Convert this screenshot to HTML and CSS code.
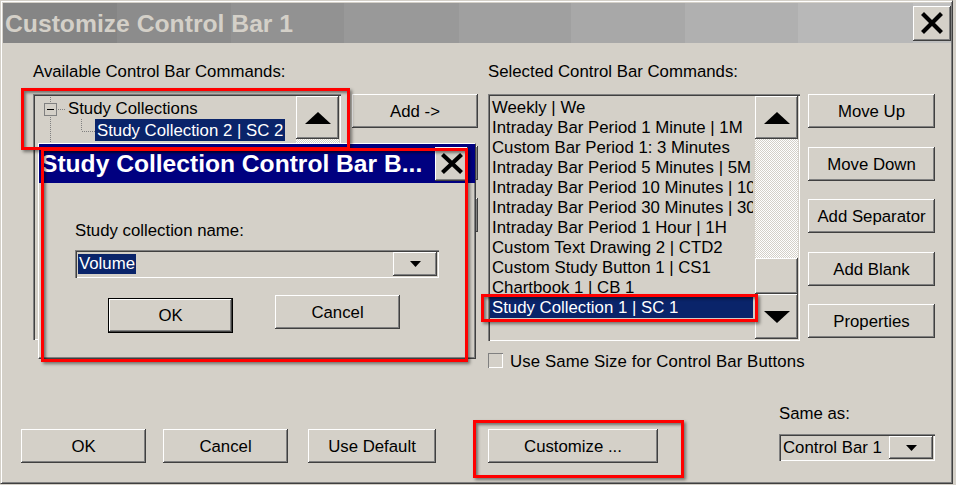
FILE: index.html
```html
<!DOCTYPE html>
<html>
<head>
<meta charset="utf-8">
<link rel="stylesheet" href="styles.css">
</head>
<body>
<div class="window">
  <div class="titlebar">
    <span class="title">Customize Control Bar 1</span>
    <div class="close-btn main-close">
      <svg width="22" height="22" viewBox="0 0 22 22"><path d="M3 3 L19 19 M19 3 L3 19" stroke="#000" stroke-width="4.2" stroke-linecap="square"/></svg>
    </div>
  </div>

  <div class="labels">
    <span>Available Control Bar Commands:</span>
    <span>Selected Control Bar Commands:</span>
  </div>

  <div class="panels">
    <div class="tree sunken">
      <div class="tree-items">
        <div class="tree-row">
          <svg class="tcell" width="31" height="22" viewBox="0 0 31 22">
            <path d="M15.5 0 V6 M15.5 18 V22" stroke="#808080" stroke-dasharray="1 1"/>
            <path d="M21 12.5 H31" stroke="#808080" stroke-dasharray="1 1"/>
            <rect x="9.5" y="6.5" width="12" height="12" fill="none" stroke="#808080"/>
            <path d="M12 12.5 H19" stroke="#000"/>
          </svg>
          <span class="tlabel">Study Collections</span>
        </div>
        <div class="tree-row">
          <svg class="tcell" width="31" height="22" viewBox="0 0 31 22">
            <path d="M15.5 0 V22" stroke="#808080" stroke-dasharray="1 1"/>
          </svg>
          <svg class="tcell" width="29" height="22" viewBox="0 0 29 22">
            <path d="M15.5 0 V12" stroke="#808080" stroke-dasharray="1 1"/>
            <path d="M16 12.5 H29" stroke="#808080" stroke-dasharray="1 1"/>
          </svg>
          <span class="tlabel selected">Study Collection 2 | SC 2</span>
        </div>
        <div class="tree-row">
          <svg class="tcell" width="31" height="22" viewBox="0 0 31 22">
            <path d="M15.5 0 V22" stroke="#808080" stroke-dasharray="1 1"/>
          </svg>
        </div>
      </div>
      <div class="vscroll">
        <div class="sbtn up">
          <svg width="26" height="12" viewBox="0 0 26 12"><polygon points="0,12 13,0 26,12" fill="#000"/></svg>
        </div>
        <div class="track"></div>
        <div class="sbtn down">
          <svg width="26" height="12" viewBox="0 0 26 12"><polygon points="0,0 26,0 13,12" fill="#000"/></svg>
        </div>
      </div>
    </div>

    <div class="midcol">
      <div class="btn">Add -&gt;</div>
      <div class="btn">&lt;- Remove</div>
      <div class="btn">Remove All</div>
    </div>

    <div class="list sunken">
      <div class="items">
        <div class="item">Weekly | We</div>
        <div class="item">Intraday Bar Period 1 Minute | 1M</div>
        <div class="item">Custom Bar Period 1: 3 Minutes</div>
        <div class="item">Intraday Bar Period 5 Minutes | 5M</div>
        <div class="item">Intraday Bar Period 10 Minutes | 10</div>
        <div class="item">Intraday Bar Period 30 Minutes | 30</div>
        <div class="item">Intraday Bar Period 1 Hour | 1H</div>
        <div class="item">Custom Text Drawing 2 | CTD2</div>
        <div class="item">Custom Study Button 1 | CS1</div>
        <div class="item">Chartbook 1 | CB 1</div>
        <div class="item selected">Study Collection 1 | SC 1</div>
      </div>
      <div class="vscroll list-scroll">
        <div class="sbtn up">
          <svg width="26" height="12" viewBox="0 0 26 12"><polygon points="0,12 13,0 26,12" fill="#000"/></svg>
        </div>
        <div class="track list-track"></div>
        <div class="sbtn thumb"></div>
        <div class="sbtn down list-down">
          <svg width="26" height="12" viewBox="0 0 26 12"><polygon points="0,0 26,0 13,12" fill="#000"/></svg>
        </div>
      </div>
    </div>

    <div class="rightcol">
      <div class="btn">Move Up</div>
      <div class="btn">Move Down</div>
      <div class="btn">Add Separator</div>
      <div class="btn">Add Blank</div>
      <div class="btn">Properties</div>
    </div>
  </div>

  <div class="checkrow">
    <span class="checkbox"></span>
    <span class="checklabel">Use Same Size for Control Bar Buttons</span>
  </div>

  <div class="bottom">
    <div class="btn b-ok">OK</div>
    <div class="btn b-cancel">Cancel</div>
    <div class="btn b-default">Use Default</div>
    <div class="btn b-custom">Customize ...</div>
    <div class="sameas">
      <span class="sameas-label">Same as:</span>
      <div class="combo sunken small-combo">
        <span class="combo-text">Control Bar 1</span>
        <div class="dropbtn">
          <svg width="11" height="6" viewBox="0 0 11 6"><polygon points="0,0 11,0 5.5,6" fill="#000"/></svg>
        </div>
      </div>
    </div>
  </div>

  <div class="popup">
    <div class="popup-title">
      <span class="ptitle">Study Collection Control Bar B...</span>
      <div class="close-btn pop-close">
        <svg width="22" height="21" viewBox="0 0 22 21"><path d="M3 3 L19 18 M19 3 L3 18" stroke="#000" stroke-width="4.2" stroke-linecap="square"/></svg>
      </div>
    </div>
    <div class="popup-body">
      <div class="plabel">Study collection name:</div>
      <div class="combo sunken pop-combo">
        <span class="combo-sel">Volume</span>
        <div class="dropbtn pop-drop">
          <svg width="11" height="6" viewBox="0 0 11 6"><polygon points="0,0 11,0 5.5,6" fill="#000"/></svg>
        </div>
      </div>
      <div class="pop-buttons">
        <div class="btn default-btn">OK</div>
        <div class="btn pop-cancel">Cancel</div>
      </div>
    </div>
  </div>

  <div class="hl hl-tree"></div>
  <div class="hl hl-popup"></div>
  <div class="hl hl-item"></div>
  <div class="hl hl-custom"></div>
</div>
</body>
</html>
```
FILE: styles.css
```css
* { box-sizing: border-box; }
html, body { margin: 0; padding: 0; background: #d4d0c8; }
body {
  font-family: "Liberation Sans", Arial, sans-serif;
  font-size: 16.8px;
  line-height: 19px;
  color: #000;
}
.window {
  position: relative;
  width: 953px;
  height: 484px;
  background: #d4d0c8;
  border: 1px solid;
  border-color: #d4d0c8 #404040 #404040 #d4d0c8;
  box-shadow: inset 1px 1px 0 #fff, inset -1px -1px 0 #808080;
  padding: 2px 1px 0 2px;
}
.titlebar {
  height: 40px;
  display: flex;
  align-items: center;
  padding: 0 0 0 2px;
  background: linear-gradient(to right,
    #858585 0 114px, #8c8c8c 114px 228px, #929292 228px 341px,
    #999999 341px 456px, #a0a0a0 456px 568px, #a8a8a8 568px 682px,
    #b0b0b0 682px 795px, #b8b8b8 795px 910px, #c0c0c0 910px);
}
.title {
  font-weight: bold;
  font-size: 24.7px;
  line-height: 28px;
  color: #d4d0c8;
  white-space: nowrap;
  margin-top: 1px;
}
.close-btn {
  display: flex;
  align-items: center;
  justify-content: center;
  background: #d4d0c8;
  box-shadow: inset -1px -1px 0 #404040, inset 1px 1px 0 #fff, inset -2px -2px 0 #808080;
}
.main-close {
  margin-left: auto;
  width: 38px;
  height: 35px;
}
.labels {
  display: grid;
  grid-template-columns: 455px auto;
  padding-left: 30px;
  margin-top: 19px;
  height: 19px;
  white-space: nowrap;
}
.panels {
  display: flex;
  align-items: flex-start;
  margin-top: 13px;
  padding-left: 30px;
}
.sunken {
  background: #d4d0c8;
  box-shadow: inset 1px 1px 0 #808080, inset 2px 2px 0 #404040, inset -1px -1px 0 #fff, inset -2px -2px 0 #d4d0c8;
  padding: 2px;
}
.tree {
  width: 308px;
  height: 246px;
  display: flex;
}
.tree-items {
  flex: 1;
  overflow: hidden;
  padding-top: 1px;
}
.tree-row {
  display: flex;
  height: 22px;
  align-items: center;
}
.tcell { flex: none; display: block; }
.tlabel {
  padding: 1px 2px 0;
  line-height: 21px;
  white-space: nowrap;
}
.tlabel.selected { background: #0a246a; color: #fff; }
.vscroll {
  width: 43px;
  flex: none;
  display: flex;
  flex-direction: column;
}
.sbtn {
  height: 43px;
  display: flex;
  align-items: center;
  justify-content: center;
  background: #d4d0c8;
  box-shadow: inset -1px -1px 0 #404040, inset 1px 1px 0 #fff, inset -2px -2px 0 #808080;
}
.track {
  flex: 1;
  background: repeating-conic-gradient(#fff 0 25%, #d4d0c8 0 50%) 0 0 / 2px 2px;
}
.midcol {
  margin-left: 11px;
  width: 126px;
  display: flex;
  flex-direction: column;
  gap: 18px;
}
.btn {
  height: 34px;
  display: flex;
  align-items: center;
  justify-content: center;
  background: #d4d0c8;
  box-shadow: inset -1px -1px 0 #404040, inset 1px 1px 0 #fff, inset -2px -2px 0 #808080;
  white-space: nowrap;
}
.list {
  margin-left: 10px;
  width: 312px;
  height: 247px;
  display: flex;
}
.items {
  width: 263px;
  flex: none;
  overflow: hidden;
  padding-top: 1px;
}
.item {
  height: 20px;
  line-height: 21px;
  padding-left: 2px;
  white-space: nowrap;
  overflow: hidden;
}
.item.selected { background: #0a246a; color: #fff; height: 21px; }
.list-scroll { margin-left: 2px; }
.list-track { flex: none; height: 119px; }
.thumb { height: 36px; }
.list-down { height: 45px; }
.rightcol {
  margin-left: 8px;
  width: 127px;
  display: flex;
  flex-direction: column;
}
.rightcol .btn:nth-child(2) { margin-top: 19px; }
.rightcol .btn:nth-child(3) { margin-top: 18px; }
.rightcol .btn:nth-child(4) { margin-top: 19px; }
.rightcol .btn:nth-child(5) { margin-top: 18px; }
.checkrow {
  display: flex;
  align-items: center;
  height: 15px;
  margin-top: 12px;
  padding-left: 485px;
}
.checkbox {
  width: 15px;
  height: 15px;
  flex: none;
  box-shadow: inset 1px 1px 0 #808080, inset -1px -1px 0 #fff;
}
.checklabel {
  margin-left: 7px;
  margin-top: 1px;
  white-space: nowrap;
  letter-spacing: 0.1px;
}
.bottom {
  display: flex;
  align-items: flex-start;
  margin-top: 36px;
  padding-left: 18px;
}
.bottom .btn { margin-top: 25px; }
.b-ok { width: 125px; }
.b-cancel { width: 125px; margin-left: 17px; }
.b-default { width: 128px; margin-left: 20px; }
.b-custom { width: 170px; margin-left: 52px; }
.sameas {
  margin-left: 121px;
  display: flex;
  flex-direction: column;
}
.sameas-label { height: 19px; white-space: nowrap; }
.combo {
  display: flex;
  align-items: center;
}
.small-combo {
  margin-top: 11px;
  width: 156px;
  height: 27px;
}
.combo-text {
  padding-left: 2px;
  flex: 1;
  white-space: nowrap;
}
.dropbtn {
  width: 44px;
  height: 23px;
  display: flex;
  align-items: center;
  justify-content: center;
  background: #d4d0c8;
  box-shadow: inset -1px -1px 0 #404040, inset 1px 1px 0 #fff, inset -2px -2px 0 #808080;
}
.popup {
  position: absolute;
  left: 37px;
  top: 142px;
  width: 438px;
  height: 216px;
  background: #d4d0c8;
  border: 1px solid;
  border-color: #fff #404040 #404040 #fff;
  box-shadow: inset -1px -1px 0 #808080;
}
.popup-title {
  height: 39px;
  background: #000080;
  display: flex;
  align-items: center;
  padding: 0 7px 0 2px;
}
.ptitle {
  font-weight: bold;
  font-size: 24.6px;
  line-height: 28px;
  color: #fff;
  white-space: nowrap;
  margin-top: 1px;
}
.pop-close {
  margin-left: auto;
  width: 33px;
  height: 34px;
}
.popup-body {
  padding: 38px 0 0 36px;
}
.plabel { height: 19px; white-space: nowrap; }
.pop-combo {
  margin-top: 10px;
  width: 364px;
  height: 28px;
  padding-left: 3px;
}
.combo-sel {
  background: #0a246a;
  color: #fff;
  line-height: 20px;
  padding: 0 1px;
}
.pop-drop {
  margin-left: auto;
  height: 24px;
}
.pop-buttons {
  display: flex;
  align-items: flex-start;
  margin-top: 17px;
  padding-left: 33px;
}
.default-btn {
  width: 125px;
  height: 35px;
  margin-top: 3px;
  box-shadow: inset 0 0 0 1px #000, inset -2px -2px 0 #404040, inset 2px 2px 0 #fff, inset -3px -3px 0 #808080;
}
.pop-cancel {
  width: 125px;
  margin-left: 42px;
}
.hl {
  position: absolute;
  border: 3px solid #f00;
  box-shadow: 2px 2px 3px rgba(0,0,0,0.45), inset 2px 2px 3px rgba(0,0,0,0.45);
  pointer-events: none;
}
.hl-tree { left: 20px; top: 87px; width: 329px; height: 62px; }
.hl-popup { left: 40px; top: 147px; width: 427px; height: 214px; }
.hl-item { left: 480px; top: 293px; width: 277px; height: 28px; }
.hl-custom { left: 472px; top: 419px; width: 211px; height: 58px; }
```
